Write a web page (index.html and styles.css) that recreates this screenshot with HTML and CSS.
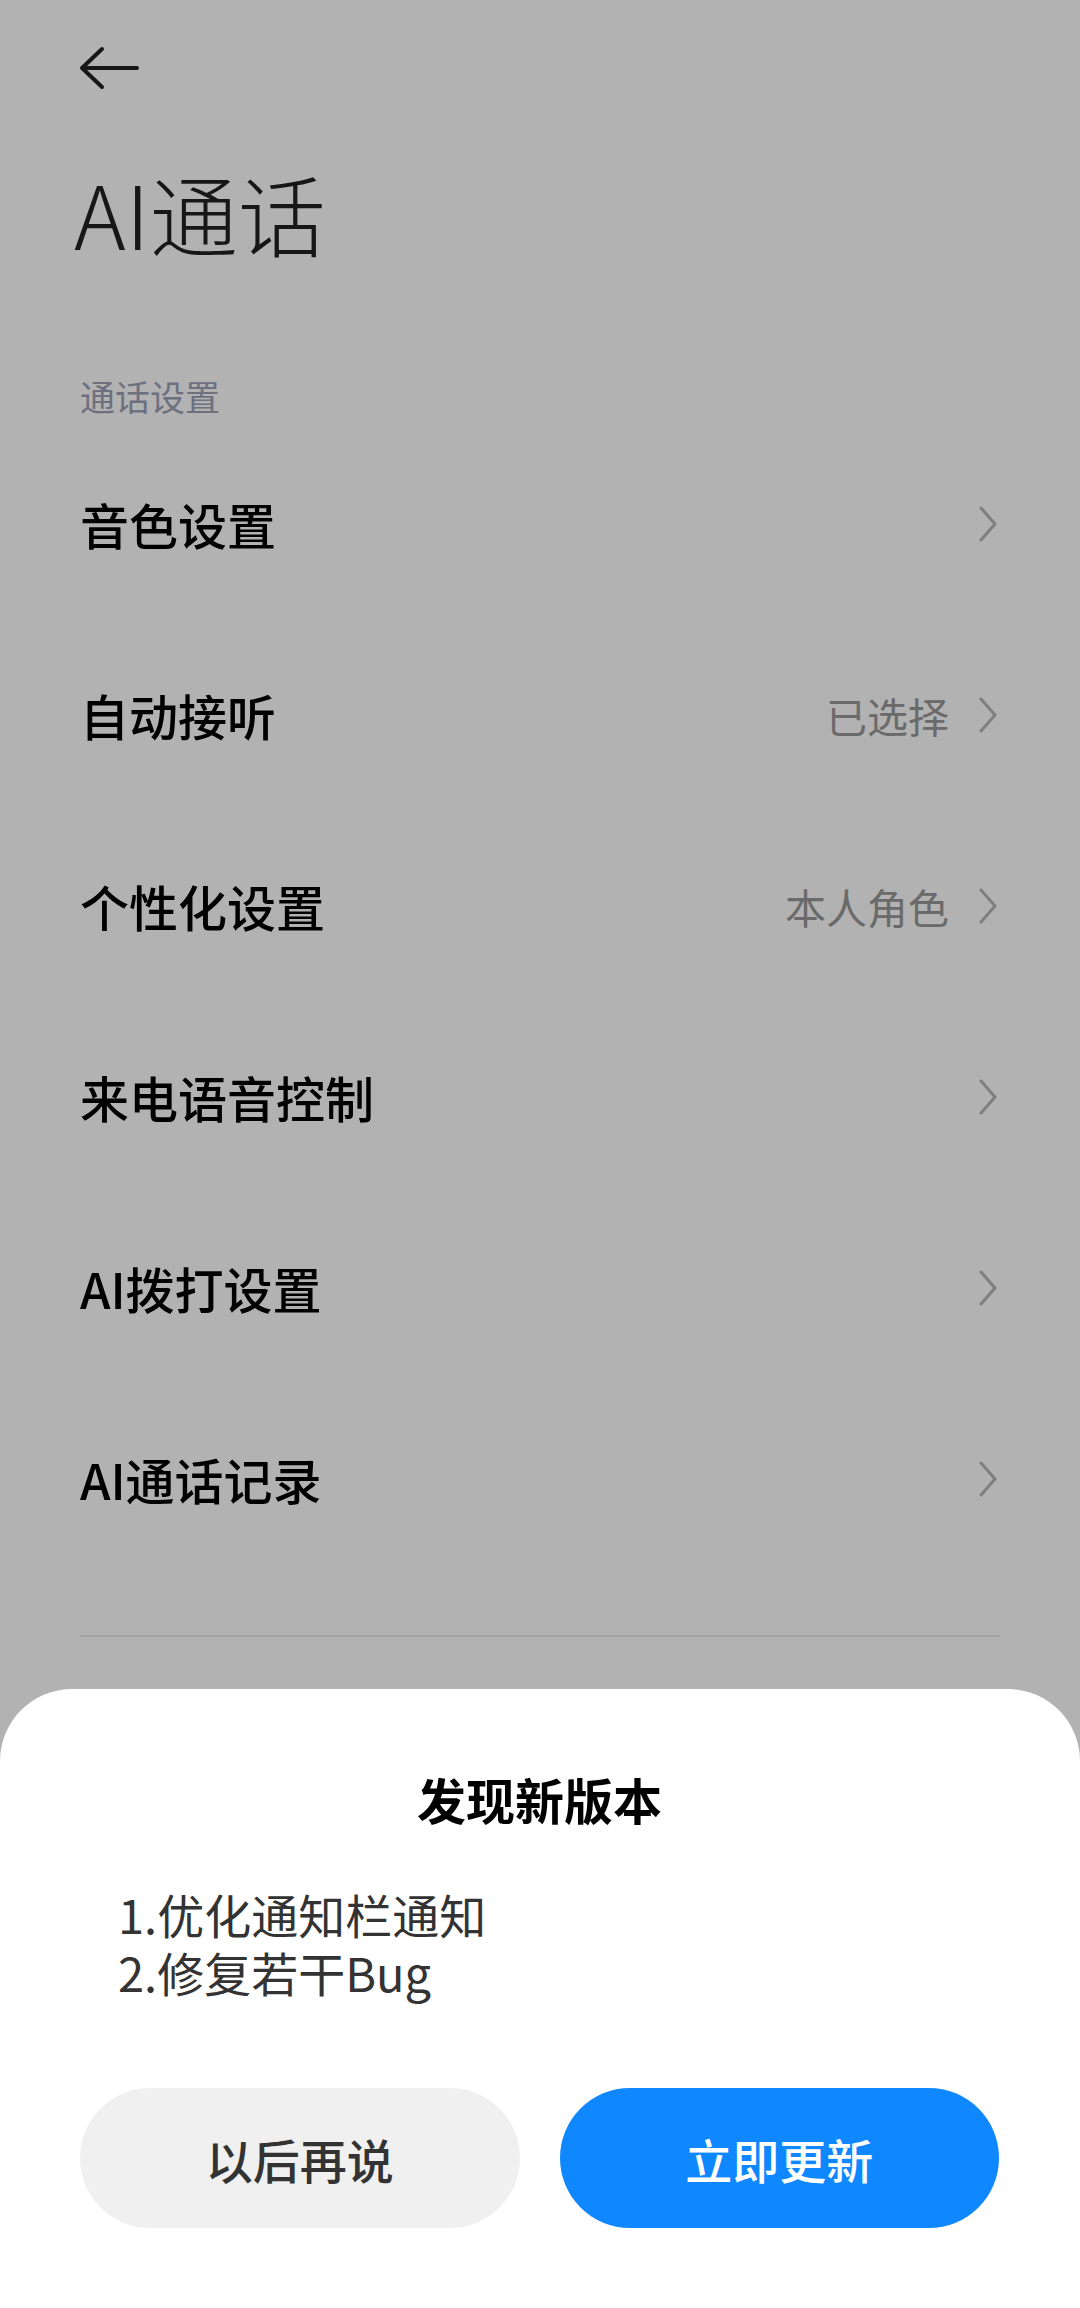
FILE: index.html
```html
<!DOCTYPE html>
<html lang="zh-CN">
<head>
    <meta charset="UTF-8">
    <meta name="viewport" content="width=device-width, initial-scale=1.0">
    <title>AI通话</title>
    <link rel="stylesheet" href="styles.css">
</head>
<body>
    <div class="page">
        <div class="topbar">
            <svg class="back" width="62" height="44" viewBox="0 0 62 44">
                <path d="M4 22 H59 M24 3 L4 22 L24 41" fill="none" stroke="#222" stroke-width="4" stroke-linecap="round" stroke-linejoin="round"/>
            </svg>
        </div>
        <h1 class="title">AI通话</h1>
        <div class="section-label">通话设置</div>
        <div class="list">
            <div class="row">
                <span class="row-title">音色设置</span>
                <span class="row-right">
                    <svg class="chevron" width="20" height="36" viewBox="0 0 20 36"><path d="M3 2 L17 18 L3 34" fill="none" stroke="#b7b7b7" stroke-width="3" stroke-linecap="round" stroke-linejoin="round"/></svg>
                </span>
            </div>
            <div class="row">
                <span class="row-title">自动接听</span>
                <span class="row-right">
                    <span class="row-value">已选择</span>
                    <svg class="chevron" width="20" height="36" viewBox="0 0 20 36"><path d="M3 2 L17 18 L3 34" fill="none" stroke="#b7b7b7" stroke-width="3" stroke-linecap="round" stroke-linejoin="round"/></svg>
                </span>
            </div>
            <div class="row">
                <span class="row-title">个性化设置</span>
                <span class="row-right">
                    <span class="row-value">本人角色</span>
                    <svg class="chevron" width="20" height="36" viewBox="0 0 20 36"><path d="M3 2 L17 18 L3 34" fill="none" stroke="#b7b7b7" stroke-width="3" stroke-linecap="round" stroke-linejoin="round"/></svg>
                </span>
            </div>
            <div class="row">
                <span class="row-title">来电语音控制</span>
                <span class="row-right">
                    <svg class="chevron" width="20" height="36" viewBox="0 0 20 36"><path d="M3 2 L17 18 L3 34" fill="none" stroke="#b7b7b7" stroke-width="3" stroke-linecap="round" stroke-linejoin="round"/></svg>
                </span>
            </div>
            <div class="row">
                <span class="row-title">AI拨打设置</span>
                <span class="row-right">
                    <svg class="chevron" width="20" height="36" viewBox="0 0 20 36"><path d="M3 2 L17 18 L3 34" fill="none" stroke="#b7b7b7" stroke-width="3" stroke-linecap="round" stroke-linejoin="round"/></svg>
                </span>
            </div>
            <div class="row">
                <span class="row-title">AI通话记录</span>
                <span class="row-right">
                    <svg class="chevron" width="20" height="36" viewBox="0 0 20 36"><path d="M3 2 L17 18 L3 34" fill="none" stroke="#b7b7b7" stroke-width="3" stroke-linecap="round" stroke-linejoin="round"/></svg>
                </span>
            </div>
        </div>
        <div class="divider"></div>
    </div>

    <div class="overlay"></div>

    <div class="sheet">
        <div class="sheet-title">发现新版本</div>
        <div class="sheet-notes">
            <p>1.优化通知栏通知</p>
            <p>2.修复若干Bug</p>
        </div>
        <div class="sheet-buttons">
            <button class="btn btn-later">以后再说</button>
            <button class="btn btn-update">立即更新</button>
        </div>
    </div>
</body>
</html>
```

FILE: styles.css
```css
body {
    margin: 0;
    padding: 0;
    background: #fff;
    font-family: "Noto Sans CJK SC", "Noto Sans", sans-serif;
    color: #000;
    width: 1080px;
    height: 2308px;
    overflow: hidden;
}
.page {
    padding: 0 82px 0 80px;
}
.topbar {
    padding-top: 46px;
    height: 106px;
    margin-left: -2px;
}
.back {
    display: block;
}
.title {
    margin: 0 0 0 -6px;
    font-size: 88px;
    font-weight: 300;
    line-height: 120px;
    color: #222;
}
.section-label {
    margin: 104px 0 12px;
    font-size: 35px;
    line-height: 40px;
    color: #9da1b7;
}
.row {
    height: 191px;
    display: flex;
    align-items: center;
    justify-content: space-between;
}
.row-title {
    font-size: 49px;
    font-weight: 500;
}
.row-right {
    display: flex;
    align-items: center;
}
.row-value {
    font-size: 41px;
    color: #999;
    margin-right: 29px;
}
.chevron {
    display: block;
}
.divider {
    margin-top: 61px;
    height: 2px;
    background: #e9e9e9;
    margin-right: -2px;
}
.overlay {
    position: fixed;
    top: 0;
    left: 0;
    width: 100%;
    height: 100%;
    background: rgba(0, 0, 0, 0.3);
}
.sheet {
    position: fixed;
    left: 0;
    right: 0;
    bottom: 0;
    height: 619px;
    box-sizing: border-box;
    background: #fff;
    border-radius: 72px 72px 0 0;
    padding: 78px 81px 0 80px;
}
.sheet-title {
    text-align: center;
    font-size: 49px;
    font-weight: 600;
    line-height: 64px;
    color: #000;
}
.sheet-notes {
    margin-top: 54px;
    padding-left: 38px;
    font-size: 47px;
    line-height: 58px;
    color: #333;
}
.sheet-notes p {
    margin: 0;
}
.sheet-buttons {
    margin-top: 87px;
    display: flex;
    gap: 40px;
}
.btn {
    flex: 1;
    height: 140px;
    border: none;
    border-radius: 70px;
    font-family: inherit;
    font-size: 47px;
    font-weight: 500;
}
.btn-later {
    background: #f0f0f0;
    color: #333;
}
.btn-update {
    background: #0f88ff;
    color: #fff;
}
```
